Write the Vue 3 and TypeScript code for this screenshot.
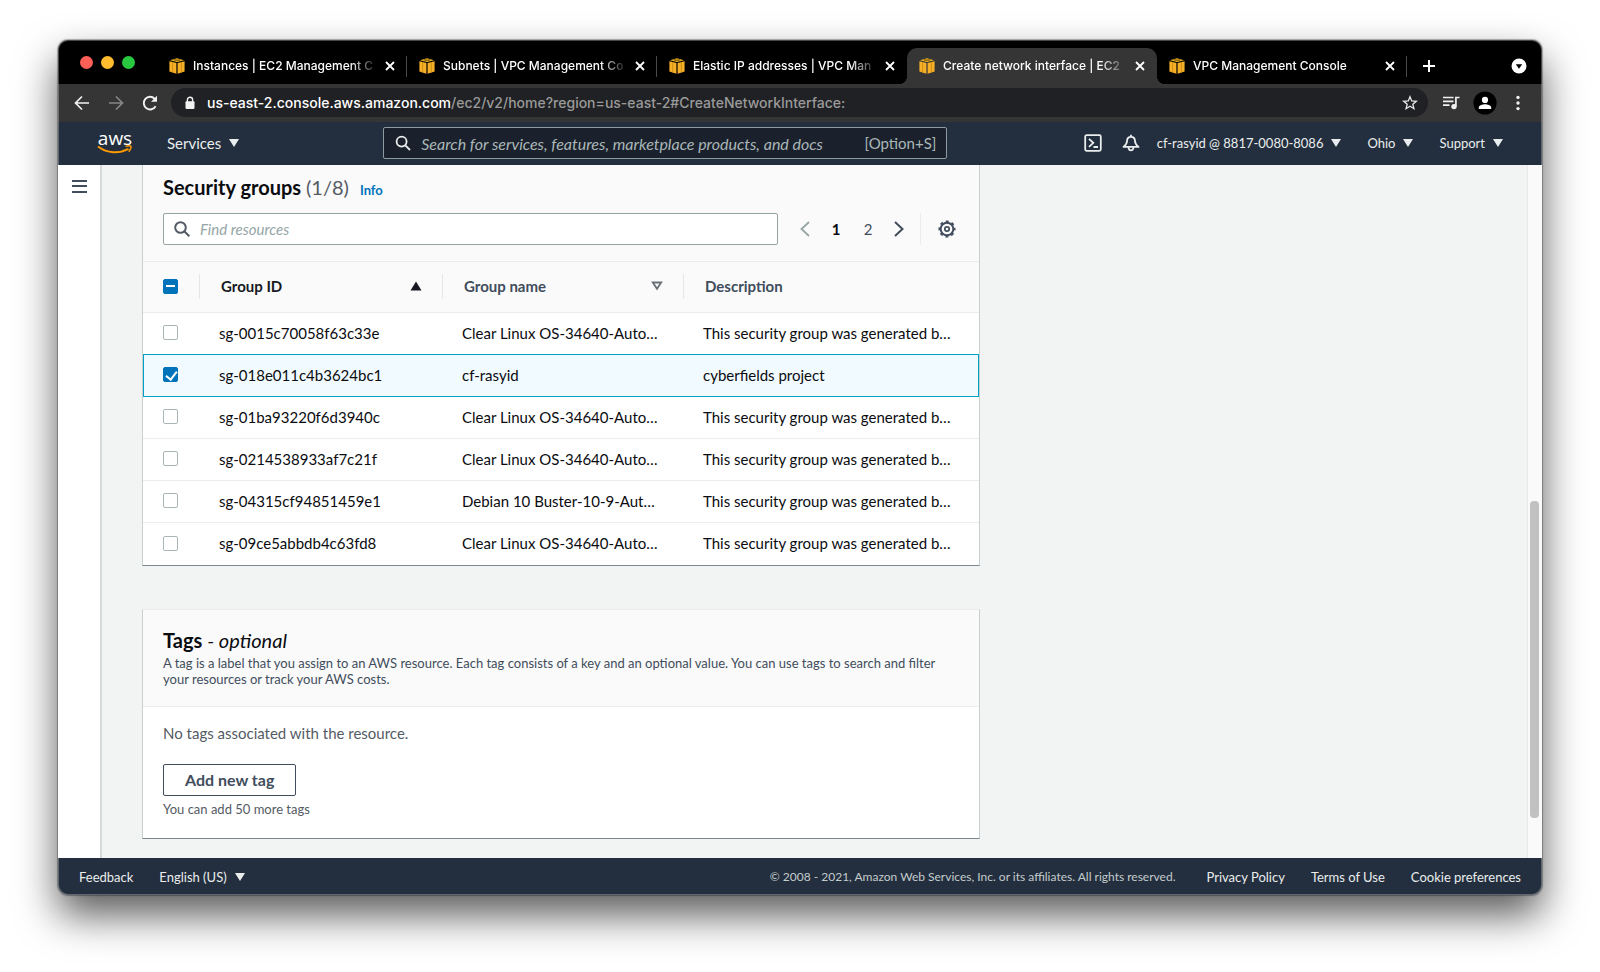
<script setup lang="ts">
import { computed, ref } from 'vue'

interface Tab {
  title: string
  active?: boolean
}

interface SecurityGroup {
  id: string
  name: string
  description: string
  selected: boolean
}

const tabs: Tab[] = [
  { title: 'Instances | EC2 Management C' },
  { title: 'Subnets | VPC Management Co' },
  { title: 'Elastic IP addresses | VPC Man' },
  { title: 'Create network interface | EC2', active: true },
  { title: 'VPC Management Console' },
]

const generated = 'This security group was generated b…'
const groups = ref<SecurityGroup[]>([
  { id: 'sg-0015c70058f63c33e', name: 'Clear Linux OS-34640-Auto…', description: generated, selected: false },
  { id: 'sg-018e011c4b3624bc1', name: 'cf-rasyid', description: 'cyberfields project', selected: true },
  { id: 'sg-01ba93220f6d3940c', name: 'Clear Linux OS-34640-Auto…', description: generated, selected: false },
  { id: 'sg-0214538933af7c21f', name: 'Clear Linux OS-34640-Auto…', description: generated, selected: false },
  { id: 'sg-04315cf94851459e1', name: 'Debian 10 Buster-10-9-Aut…', description: generated, selected: false },
  { id: 'sg-09ce5abbdb4c63fd8', name: 'Clear Linux OS-34640-Auto…', description: generated, selected: false },
])

const totalGroups = 8
const selectedCount = computed(() => groups.value.filter((g) => g.selected).length)
const partial = computed(() => selectedCount.value > 0 && selectedCount.value < groups.value.length)

function toggleAll(event: Event) {
  const checked = (event.target as HTMLInputElement).checked
  groups.value.forEach((g) => (g.selected = checked))
}
</script>

<template>
  <div class="desktop">
    <div class="window">
      <header class="tab-strip">
        <div class="lights">
          <button class="light red" aria-label="Close window"></button>
          <button class="light yellow" aria-label="Minimize window"></button>
          <button class="light green" aria-label="Zoom window"></button>
        </div>
        <div v-for="tab in tabs" :key="tab.title" class="tab" :class="{ active: tab.active }">
          <svg class="favicon" viewBox="0 0 16 16" aria-hidden="true">
            <path d="M0.4 3.2 7.4 5v10.8L0.4 13.6z" fill="#f5b027" />
            <path d="M15.6 3.2 8.6 5v10.8l7-2.2z" fill="#f5b027" />
            <path d="M8 0.2 15 2.2 8 4.1 1 2.2z" fill="#fbc02d" />
            <path d="M4.6 1.2 11.6 3.1M11.4 1.2 4.4 3.1" stroke="#6b4a00" stroke-width="0.7" />
            <path d="M3.6 4v10.6M12.4 4v10.6" stroke="#c98512" stroke-width="0.8" />
          </svg>
          <span class="tab-title">{{ tab.title }}</span>
          <button class="plain" aria-label="Close tab">
            <svg width="16" height="16" viewBox="0 0 16 16" fill="none" stroke="#fff" stroke-width="1.8">
              <path d="M4 4l8 8M12 4l-8 8" />
            </svg>
          </button>
        </div>
        <button class="plain new-tab" aria-label="New tab">
          <svg width="16" height="16" viewBox="0 0 16 16" fill="none" stroke="#fff" stroke-width="2">
            <path d="M8 2v12M2 8h12" />
          </svg>
        </button>
        <button class="plain tab-search" aria-label="Search tabs">
          <svg width="16" height="16" viewBox="0 0 16 16">
            <circle cx="8" cy="8" r="7.5" fill="#fff" />
            <path d="M4.8 6.2h6.4L8 10.8z" fill="#000" />
          </svg>
        </button>
      </header>

      <div class="toolbar">
        <button class="plain" aria-label="Back">
          <svg width="18" height="18" viewBox="0 0 18 18" fill="none" stroke="#f1f1f1" stroke-width="1.7">
            <path d="M16 9H3M9 2.5 2.5 9 9 15.5" />
          </svg>
        </button>
        <button class="plain" aria-label="Forward">
          <svg width="18" height="18" viewBox="0 0 18 18" fill="none" stroke="#868686" stroke-width="1.7">
            <path d="M2 9h13M9 2.5 15.5 9 9 15.5" />
          </svg>
        </button>
        <button class="plain" aria-label="Reload">
          <svg width="18" height="18" viewBox="0 0 18 18" fill="none" stroke="#f1f1f1" stroke-width="1.9">
            <path d="M14.6 12.2A6.3 6.3 0 1 1 13.7 4.8L15 6.2" />
            <path d="M16 1.8v6h-6z" fill="#f1f1f1" stroke="none" />
          </svg>
        </button>
        <div class="omnibox">
          <svg width="12" height="14" viewBox="0 0 12 14" aria-hidden="true">
            <rect x="1.5" y="5.2" width="9" height="7.8" rx="1" fill="#f1f1f1" />
            <path d="M3.4 6V3.8a2.6 2.6 0 0 1 5.2 0V6" fill="none" stroke="#f1f1f1" stroke-width="1.4" />
          </svg>
          <span class="url"><b>us-east-2.console.aws.amazon.com</b>/ec2/v2/home?region=us-east-2#CreateNetworkInterface:</span>
          <button class="plain" aria-label="Bookmark this page">
            <svg width="16" height="16" viewBox="0 0 16 16" fill="none" stroke="#e8e8e8" stroke-width="1.3" stroke-linejoin="miter">
              <path d="M8 1.8 9.7 6l4.6.3-3.5 2.9 1.1 4.5L8 11.3l-3.9 2.4 1.1-4.5L1.7 6.3 6.3 6z" />
            </svg>
          </button>
        </div>
        <button class="plain media" aria-label="Media controls">
          <svg width="18" height="16" viewBox="0 0 18 16" fill="none" stroke="#f1f1f1" stroke-width="1.7">
            <path d="M1 2.5h10.5M1 6.3h10.5M1 10.1h6.5M13.9 11V2.5h3.6" />
            <circle cx="12" cy="11.6" r="2.7" fill="#f1f1f1" stroke="none" />
          </svg>
        </button>
        <button class="plain" aria-label="Profile">
          <svg width="24" height="24" viewBox="0 0 24 24">
            <circle cx="12" cy="12" r="11.6" fill="#000" />
            <circle cx="12" cy="8.9" r="3.1" fill="#fff" />
            <path d="M5.8 18v-1.4c0-2.3 4-3.3 6.2-3.3s6.2 1 6.2 3.3V18z" fill="#fff" />
          </svg>
        </button>
        <button class="plain menu" aria-label="Browser menu">
          <svg width="4" height="16" viewBox="0 0 4 16" fill="#f1f1f1">
            <circle cx="2" cy="2.4" r="1.7" />
            <circle cx="2" cy="8" r="1.7" />
            <circle cx="2" cy="13.6" r="1.7" />
          </svg>
        </button>
      </div>

      <nav class="aws-nav">
        <a href="#" class="logo" aria-label="AWS home">
          <span>aws</span>
          <svg width="36" height="10" viewBox="0 0 36 10" fill="none" stroke="#ff9900" aria-hidden="true">
            <path d="M1 1.5C10.5 8.7 22 8.8 31.5 3.8" stroke-width="2" />
            <path d="M28.5 1.4c2.6-.7 5-.6 5.4 0 .4.7-.3 3.4-2.2 5.3" stroke-width="1.5" />
          </svg>
        </a>
        <button class="nav-item services">Services<i class="caret"></i></button>
        <label class="nav-search">
          <svg width="16" height="16" viewBox="0 0 16 16" fill="none" stroke="#eaeded" stroke-width="1.8" aria-hidden="true">
            <circle cx="6.6" cy="6.6" r="5" />
            <path d="M10.3 10.3 15 15" />
          </svg>
          <input type="search" aria-label="Search AWS" placeholder="Search for services, features, marketplace products, and docs" />
          <span>[Option+S]</span>
        </label>
        <button class="plain shell" aria-label="CloudShell">
          <svg width="18" height="18" viewBox="0 0 18 18" fill="none" stroke="#eaeded" stroke-width="1.8">
            <rect x="1.2" y="1.2" width="15.6" height="15.6" rx="1.5" />
            <path d="M5 4.8 9.3 8.8 5 12.8M9.5 13h4.5" />
          </svg>
        </button>
        <button class="plain bell" aria-label="Notifications">
          <svg width="18" height="18" viewBox="0 0 18 18" fill="none" stroke="#eaeded" stroke-width="1.8" stroke-linejoin="round">
            <path d="M9 .8v2M9 2.8C6.3 2.8 5 4.8 5 7.2 5 9.4 3.6 11 1.5 12.9h15C14.4 11 13 9.4 13 7.2c0-2.4-1.3-4.4-4-4.4z" />
            <path d="M6.6 13.2c0 4.2 4.8 4.2 4.8 0" />
          </svg>
        </button>
        <button class="nav-item">cf-rasyid @ 8817-0080-8086<i class="caret"></i></button>
        <button class="nav-item">Ohio<i class="caret"></i></button>
        <button class="nav-item">Support<i class="caret"></i></button>
      </nav>

      <div class="body">
        <aside class="side">
          <button class="plain" aria-label="Open navigation">
            <svg width="16" height="14" viewBox="0 0 16 14" stroke="#414d5c" stroke-width="2">
              <path d="M0 2h15M0 7h15M0 13h15" />
            </svg>
          </button>
        </aside>

        <main class="content">
          <section class="card groups">
            <div class="groups-head">
              <div class="title-row">
                <h2>Security groups <span class="count">({{ selectedCount }}/{{ totalGroups }})</span></h2>
                <a href="#" class="info">Info</a>
              </div>
              <div class="tools">
                <label class="filter">
                  <svg width="16" height="16" viewBox="0 0 16 16" fill="none" stroke="#545b64" stroke-width="2" aria-hidden="true">
                    <circle cx="6.5" cy="6.5" r="5.3" />
                    <path d="M10.3 10.3 15.3 15.3" />
                  </svg>
                  <input type="search" aria-label="Find resources" placeholder="Find resources" />
                </label>
                <div class="pages">
                  <button class="plain" aria-label="Previous page">
                    <svg width="10" height="16" viewBox="0 0 10 16" fill="none" stroke="#95a5a6" stroke-width="1.8">
                      <path d="M9 1 1.5 8 9 15" />
                    </svg>
                  </button>
                  <span class="numbers">
                    <button class="page current">1</button>
                    <button class="page">2</button>
                  </span>
                  <button class="plain" aria-label="Next page">
                    <svg width="10" height="16" viewBox="0 0 10 16" fill="none" stroke="#414d5c" stroke-width="2">
                      <path d="M1 1l7.5 7L1 15" />
                    </svg>
                  </button>
                </div>
                <button class="plain settings" aria-label="Preferences">
                  <svg width="18" height="18" viewBox="0 0 18 18" fill="none" stroke="#414d5c">
                    <circle cx="9" cy="9" r="6.3" stroke-width="1.9" />
                    <circle cx="9" cy="9" r="7.7" stroke-width="1.7" stroke-dasharray="3 3.047" stroke-dashoffset="1.5" />
                    <circle cx="9" cy="9" r="2.2" stroke-width="1.7" />
                  </svg>
                </button>
              </div>
            </div>

            <table>
              <colgroup>
                <col class="c-check" />
                <col class="c-id" />
                <col class="c-name" />
                <col />
              </colgroup>
              <thead>
                <tr>
                  <th class="check">
                    <input
                      type="checkbox"
                      aria-label="Select all security groups"
                      :class="{ partial }"
                      :checked="selectedCount === groups.length"
                      @change="toggleAll"
                    />
                  </th>
                  <th>
                    <button class="sort sorted">
                      Group ID
                      <svg width="12" height="10" viewBox="0 0 12 10"><path d="M6 .5 11.5 9.5H.5z" fill="#16191f" /></svg>
                    </button>
                  </th>
                  <th>
                    <button class="sort">
                      Group name
                      <svg width="12" height="10" viewBox="0 0 12 10">
                        <path d="M1.8 1.5h8.4L6 7.8z" fill="none" stroke="#687078" stroke-width="1.8" />
                      </svg>
                    </button>
                  </th>
                  <th>Description</th>
                </tr>
              </thead>
              <tbody>
                <tr v-for="group in groups" :key="group.id" :class="{ selected: group.selected }">
                  <td class="check">
                    <input v-model="group.selected" type="checkbox" :aria-label="'Select ' + group.id" />
                  </td>
                  <td>{{ group.id }}</td>
                  <td>{{ group.name }}</td>
                  <td>{{ group.description }}</td>
                </tr>
              </tbody>
            </table>
          </section>

          <section class="card tags">
            <div class="tags-head">
              <h2>Tags <em>- optional</em></h2>
              <p>
                A tag is a label that you assign to an AWS resource. Each tag consists of a key and an optional value.
                You can use tags to search and filter your resources or track your AWS costs.
              </p>
            </div>
            <div class="tags-body">
              <p>No tags associated with the resource.</p>
              <button class="add">Add new tag</button>
              <small>You can add 50 more tags</small>
            </div>
          </section>
        </main>

        <div class="scrollbar"><div class="thumb"></div></div>
      </div>

      <footer class="footer">
        <a href="#">Feedback</a>
        <button class="nav-item">English (US)<i class="caret"></i></button>
        <span class="copyright">© 2008 - 2021, Amazon Web Services, Inc. or its affiliates. All rights reserved.</span>
        <a href="#">Privacy Policy</a>
        <a href="#">Terms of Use</a>
        <a href="#">Cookie preferences</a>
      </footer>
    </div>
  </div>
</template>

<style>
body {
  margin: 0;
  background: #fff;
}
</style>

<style scoped>
* {
  box-sizing: border-box;
}

.desktop {
  min-height: 100vh;
  padding: 40px 58px 77px;
  overflow: hidden;
  display: flex;
  font-family: Lato, "Noto Sans", sans-serif;
  font-size: 15px;
  color: #16191f;
}

.window {
  flex: 1;
  min-width: 0;
  display: flex;
  flex-direction: column;
  border-radius: 10px;
  overflow: hidden;
  position: relative;
  box-shadow: 0 0 1px 1px rgba(0, 0, 0, 0.3), 0 20px 40px rgba(0, 0, 0, 0.65);
}

.window::after {
  content: "";
  position: absolute;
  inset: 0;
  border-radius: 10px;
  box-shadow: inset 0 0 0 1px rgba(255, 255, 255, 0.28);
  pointer-events: none;
}

button,
input {
  font: inherit;
  color: inherit;
}

button {
  cursor: pointer;
  white-space: nowrap;
}

svg {
  display: block;
  flex: none;
}

.plain {
  border: 0;
  padding: 0;
  background: none;
  display: flex;
  align-items: center;
  justify-content: center;
  flex: none;
}

/* Browser chrome */
.tab-strip {
  height: 44px;
  padding-top: 8px;
  background: #000;
  color: #fff;
  display: flex;
  align-items: stretch;
  font: 500 12px Inter, sans-serif;
}

.lights {
  width: 99px;
  padding: 8px 0 0 22px;
  display: flex;
  gap: 8px;
  flex: none;
}

.light {
  width: 13px;
  height: 13px;
  border: 0;
  padding: 0;
  border-radius: 50%;
}

.red { background: #ff5f57; }
.yellow { background: #febc2e; }
.green { background: #28c840; }

.tab {
  flex: 0 1 250px;
  min-width: 0;
  padding: 0 9px 0 12px;
  display: flex;
  align-items: center;
  position: relative;
}

.tab:not(.active)::after {
  content: "";
  position: absolute;
  right: 0;
  top: 8px;
  width: 1px;
  height: 21px;
  background: #4a4a4a;
}

.tab:has(+ .active)::after {
  display: none;
}

.tab.active {
  background: #353535;
  border-radius: 10px 10px 0 0;
}

.tab.active::before,
.tab.active::after {
  content: "";
  position: absolute;
  bottom: 0;
  width: 8px;
  height: 8px;
}

.tab.active::before {
  left: -8px;
  background: radial-gradient(circle at 0 0, #000 8px, #353535 8px);
}

.tab.active::after {
  right: -8px;
  background: radial-gradient(circle at 100% 0, #000 8px, #353535 8px);
}

.favicon {
  width: 16px;
  height: 16px;
  margin-right: 8px;
}

.tab-title {
  flex: 1;
  min-width: 0;
  overflow: hidden;
  white-space: nowrap;
  margin-right: 4px;
  line-height: 20px;
  mask-image: linear-gradient(to right, #000 calc(100% - 28px), transparent);
}

.new-tab {
  width: 44px;
}

.tab-search {
  margin-left: auto;
  margin-right: 15px;
}

.toolbar {
  height: 38px;
  padding: 0 22px 1px 15px;
  background: #353535;
  display: flex;
  align-items: center;
  gap: 16px;
  font: 500 14px Inter, sans-serif;
}

.omnibox {
  flex: 1;
  min-width: 0;
  height: 29px;
  margin-left: -4px;
  padding: 0 10px 0 13px;
  border-radius: 15px;
  background: #202124;
  color: #9a9a9a;
  display: flex;
  align-items: center;
  gap: 11px;
}

.url {
  flex: 1;
  min-width: 0;
  overflow: hidden;
  white-space: nowrap;
}

.url b {
  font-weight: 500;
  color: #fff;
}

.media {
  margin: 0 -3px 0 -2px;
}

.menu {
  margin-left: 3px;
}

/* Console navigation */
.aws-nav {
  height: 43px;
  padding: 0 39px 1px;
  background: #232f3e;
  color: #eaeded;
  display: flex;
  align-items: center;
  font-size: 13px;
}

.logo {
  width: 36px;
  margin-right: 34px;
  color: #fff;
  text-decoration: none;
  font: 500 19px/14px "Open Sans", sans-serif;
  text-align: center;
  flex: none;
}

.logo span {
  display: block;
}

.nav-item {
  border: 0;
  padding: 0;
  background: none;
  display: flex;
  align-items: center;
  gap: 8px;
}

.nav-item + .nav-item {
  margin-left: 26px;
}

.services {
  font-size: 15px;
}

.caret {
  border: 5px solid transparent;
  border-top: 8px solid #eaeded;
  border-bottom: 0;
}

.nav-search {
  flex: 0 1 564px;
  min-width: 0;
  height: 32px;
  margin-left: 144px;
  margin-right: auto;
  padding: 0 10px 0 11px;
  border: 1px solid #8b9b9f;
  border-radius: 2px;
  background: #1a212c;
  color: #aab7b8;
  display: flex;
  align-items: center;
  gap: 10px;
  font-size: 15px;
}

.nav-search input,
.filter input {
  flex: 1;
  min-width: 0;
  border: 0;
  padding: 0;
  outline: 0;
  background: none;
}

.nav-search input {
  font-size: 16px;
}

.nav-search input::placeholder {
  color: #aab7b8;
  font-style: italic;
}

.bell {
  margin: 0 17px 0 20px;
}

/* Page */
.body {
  flex: 1;
  display: flex;
  background: #f2f3f3;
}

.side {
  width: 44px;
  padding: 14px;
  background: #fff;
  border-right: 2px solid #d5dbdb;
  flex: none;
}

.content {
  flex: 1;
  min-width: 0;
  padding: 0 40px 19px;
}

.card {
  max-width: 838px;
  background: #fff;
  border: 1px solid #c8cfd0;
  border-bottom-color: #7b8790;
}

.groups {
  border-top: 0;
  margin-bottom: 43px;
}

.tags {
  border-top-color: #eaeded;
}

h2 {
  margin: 0;
  font-size: 20px;
  line-height: 24px;
  font-weight: 700;
  color: #0a0c10;
}

.groups-head {
  padding: 10px 20px 16px;
  background: #fafafa;
  border-bottom: 1px solid #eaeded;
}

.title-row {
  display: flex;
  align-items: baseline;
  gap: 11px;
}

.count {
  font-weight: 400;
  color: #545b64;
}

.info {
  font-size: 13px;
  font-weight: 700;
  color: #0073bb;
  text-decoration: none;
}

.tools {
  margin-top: 14px;
  display: flex;
  align-items: center;
}

.filter {
  flex: 1;
  min-width: 0;
  height: 32px;
  padding: 0 10px;
  border: 1px solid #95a5a6;
  border-radius: 2px;
  background: #fff;
  display: flex;
  align-items: center;
  gap: 10px;
}

.filter input::placeholder {
  color: #95a5a6;
  font-style: italic;
}

.pages {
  height: 32px;
  padding: 0 16px 0 22px;
  border-right: 1px solid #eaeded;
  display: flex;
  align-items: center;
  gap: 10px;
}

.numbers {
  display: flex;
}

.page {
  width: 32px;
  border: 0;
  padding: 0;
  background: none;
  color: #414d5c;
  text-align: center;
}

.page.current {
  font-weight: 700;
  color: #0a0c10;
}

.settings {
  margin: 0 3px 0 17px;
}

table {
  width: 100%;
  table-layout: fixed;
  border-collapse: separate;
  border-spacing: 0;
}

.c-check { width: 56px; }
.c-id { width: 243px; }
.c-name { width: 241px; }

th {
  height: 51px;
  padding: 0 20px 2px 22px;
  background: #fafafa;
  border-bottom: 1px solid #eaeded;
  color: #414d5c;
  font-weight: 700;
  text-align: left;
  position: relative;
}

th + th::before {
  content: "";
  position: absolute;
  left: 0;
  top: 12px;
  width: 1px;
  height: 25px;
  background: #e3e7e7;
}

.sort {
  width: 100%;
  border: 0;
  padding: 0;
  background: none;
  font-weight: 700;
  display: flex;
  align-items: center;
  justify-content: space-between;
}

.sorted {
  color: #16191f;
}

td {
  height: 42px;
  padding: 0 20px 2px;
  border-bottom: 1px solid #eaeded;
  color: #0a0c10;
  white-space: nowrap;
}

th.check,
td.check {
  padding: 0 20px 2px;
}

tbody tr:last-child td {
  border-bottom: 0;
}

.selected td {
  background: #f1faff;
  border-bottom-color: #00a1c9;
  box-shadow: 0 -1px #00a1c9;
}

.selected td:first-child {
  box-shadow: 0 -1px #00a1c9, inset 1px 0 #00a1c9;
}

.selected td:last-child {
  box-shadow: 0 -1px #00a1c9, inset -1px 0 #00a1c9;
}

input[type="checkbox"] {
  appearance: none;
  display: block;
  width: 15px;
  height: 15px;
  margin: 0;
  border: 1px solid #aab7b8;
  border-radius: 2px;
  background: #fff;
  position: relative;
}

input[type="checkbox"]:checked,
input[type="checkbox"].partial {
  background: #0073bb;
  border-color: #0073bb;
}

input[type="checkbox"]:checked::before {
  content: "";
  position: absolute;
  left: 4px;
  top: 1px;
  width: 5px;
  height: 9px;
  border: solid #fff;
  border-width: 0 2px 2px 0;
  transform: rotate(38deg);
}

input[type="checkbox"].partial::before {
  content: "";
  position: absolute;
  left: 2px;
  right: 2px;
  top: 5px;
  height: 2px;
  background: #fff;
}

.tags-head {
  padding: 18px 20px 19px;
  background: #fafafa;
  border-bottom: 1px solid #eaeded;
}

.tags-head em {
  font-weight: 400;
}

.tags-head p {
  margin: 3px 0 0;
  color: #414d5c;
  font-size: 13px;
  line-height: 16px;
}

.tags-body {
  padding: 16px 20px 21px;
  color: #545b64;
}

.tags-body p {
  margin: 0 0 21px;
  line-height: 20px;
}

.tags-body small {
  display: block;
  margin-top: 5px;
  font-size: 13px;
  line-height: 16px;
}

.add {
  display: block;
  height: 32px;
  padding: 0 21px 2px;
  border: 1px solid #414d5c;
  border-radius: 2px;
  background: #fff;
  color: #414d5c;
  font-size: 16px;
  font-weight: 700;
}

.scrollbar {
  width: 15px;
  padding: 0 3px 0 2px;
  border-left: 1px solid #e8e8e8;
  background: #fafafa;
  display: grid;
  grid-template-rows: 336fr 317fr 40fr;
  flex: none;
}

.thumb {
  grid-row: 2;
  border-radius: 4px;
  background: #c1c1c1;
}

.footer {
  height: 37px;
  padding: 0 21px;
  background: #232f3e;
  color: #eaeded;
  display: flex;
  align-items: center;
  gap: 26px;
  font-size: 13px;
}

.footer a {
  color: inherit;
  text-decoration: none;
  white-space: nowrap;
}

.copyright {
  margin-left: auto;
  margin-right: 5px;
  color: #c3cccd;
  font-size: 12px;
}
</style>
